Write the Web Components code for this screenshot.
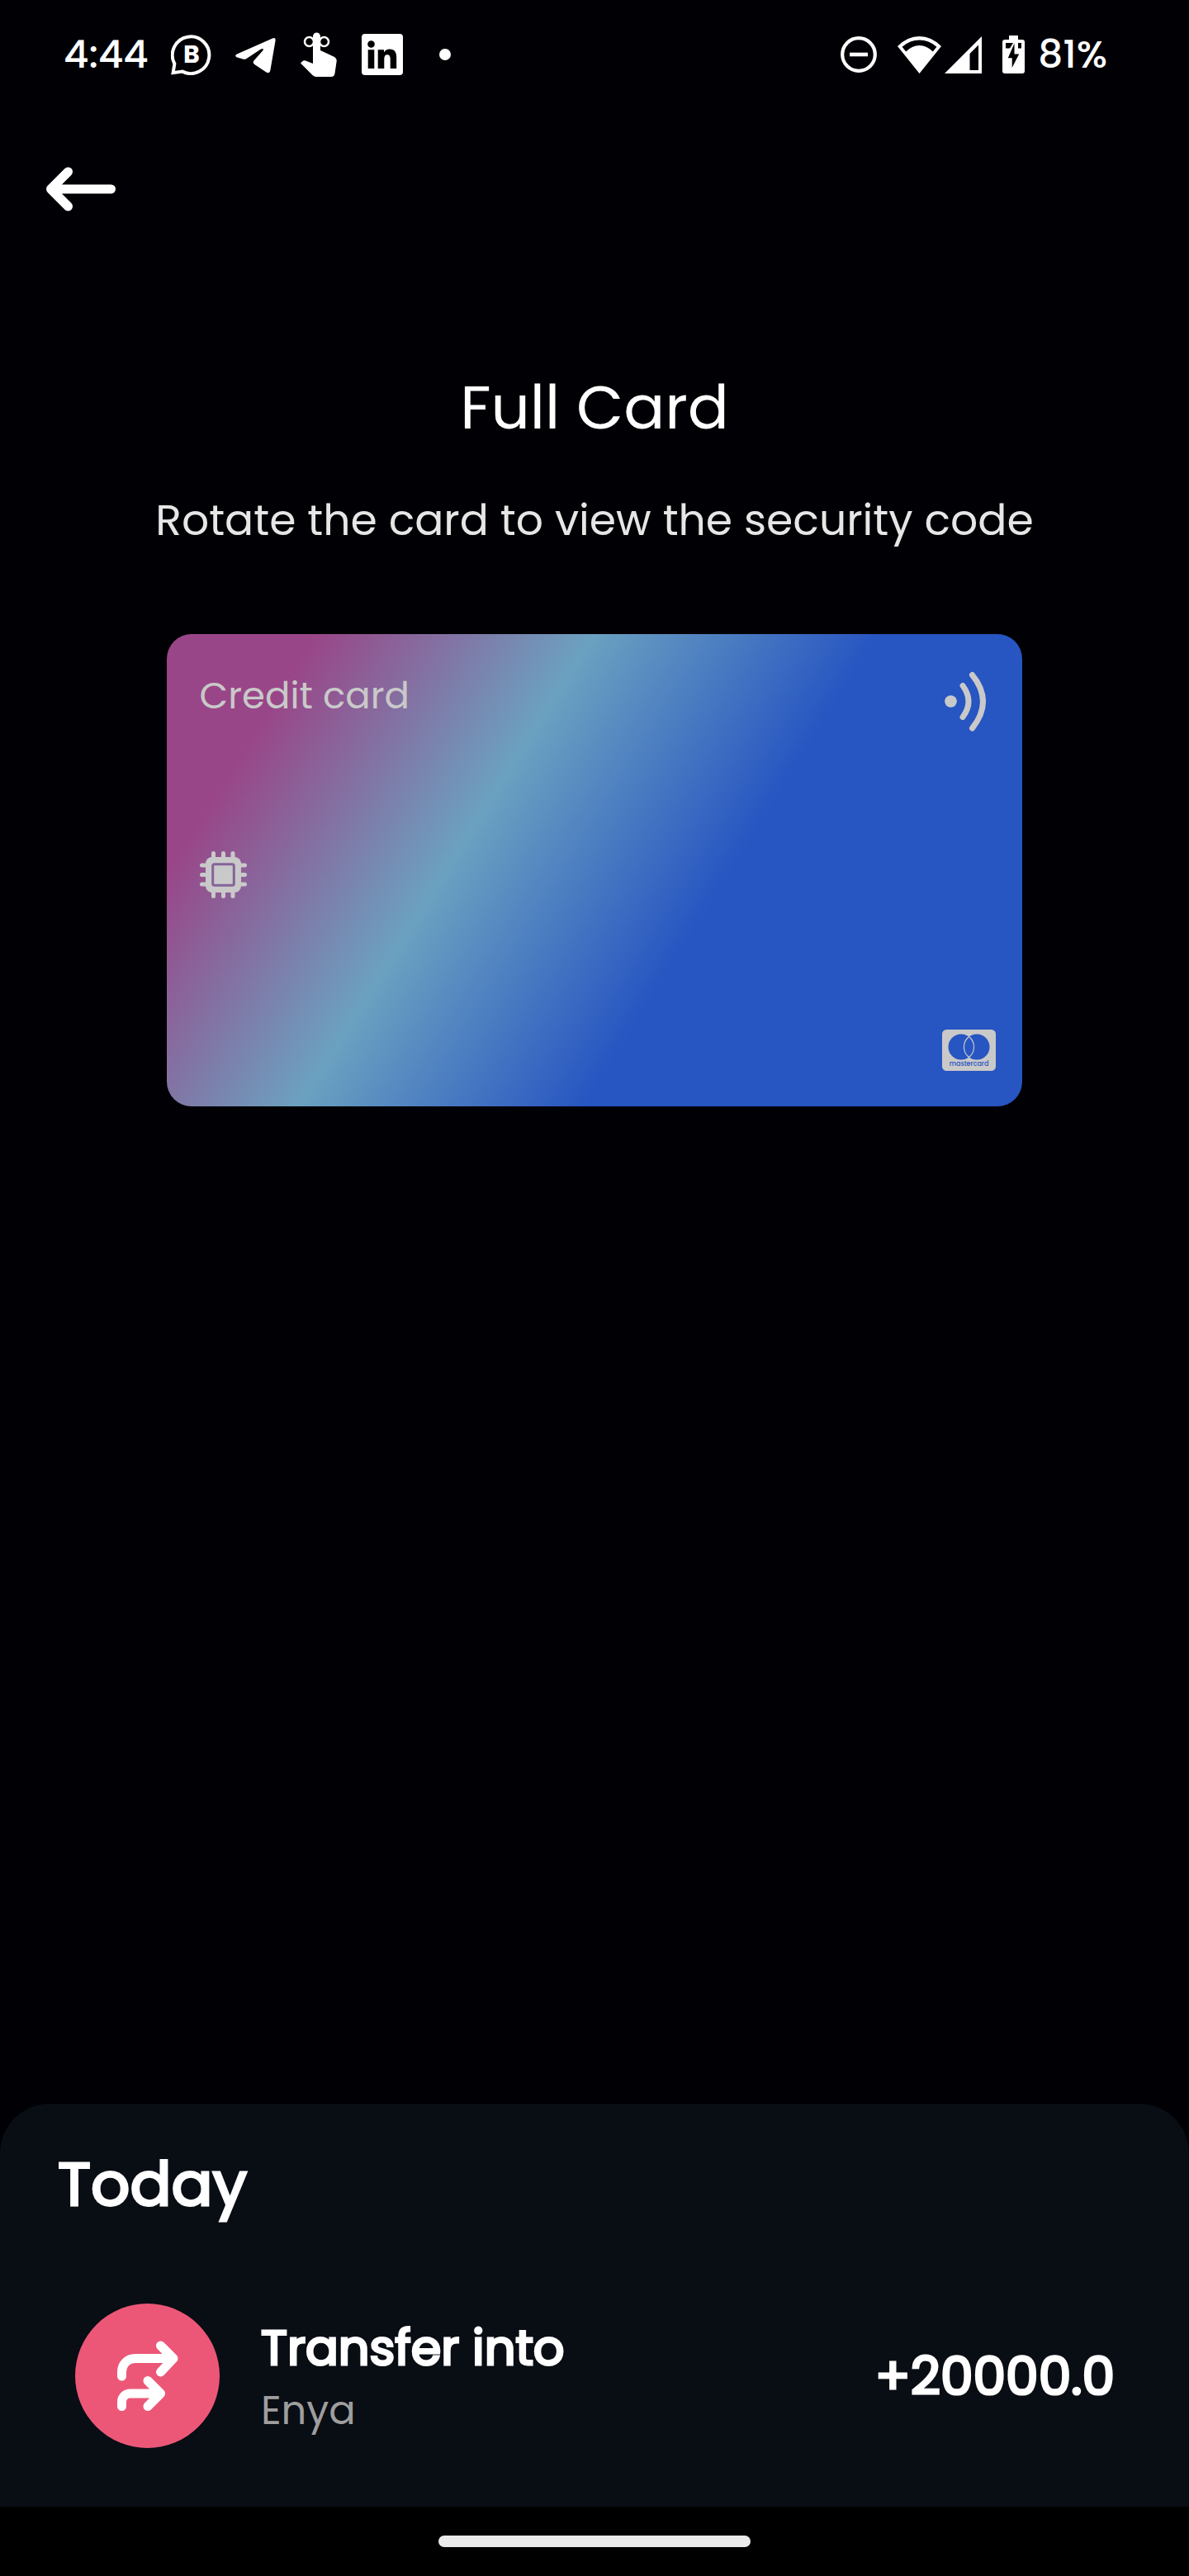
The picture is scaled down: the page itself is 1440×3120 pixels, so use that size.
<!DOCTYPE html>
<html lang="en">
<head>
<meta charset="utf-8">
<meta name="viewport" content="width=device-width, initial-scale=1">
<title>Full Card</title>
<style>
  html, body { margin: 0; background: #000005; }
  body { font-family: Poppins, Inter, "Liberation Sans", sans-serif; color: #fff; }
</style>
</head>
<body>
<full-card-screen></full-card-screen>

<script>
  const define = (name, html) => {
    const template = document.createElement('template');
    template.innerHTML = html;
    customElements.define(name, class extends HTMLElement {
      constructor() {
        super();
        this.attachShadow({ mode: 'open' }).append(template.content.cloneNode(true));
      }
    });
  };

  define('status-bar', `
    <style>
      :host { display: flex; justify-content: space-between; align-items: center; height: 132px; padding: 0 99px 0 77px; font-size: 47px; line-height: 56px; font-weight: 500; }
      div { display: flex; align-items: center; }
      .left { gap: 27px; }
      .right { gap: 25px; }
      .signal { gap: 4px; }
      .battery { gap: 16px; }
      svg { display: block; flex: none; }
    </style>
    <div class="left">
      <time>4:44</time>
      <svg width="50" height="50" viewBox="0 0 50 50" aria-hidden="true">
        <path d="M2.6 47.2 4.4 36.2A22.3 22.3 0 1 1 14 45.6Z" fill="none" stroke="#fff" stroke-width="4"/>
        <text x="25" y="35" font-size="30" font-weight="700" text-anchor="middle" fill="#fff">B</text>
      </svg>
      <svg width="50" height="50" viewBox="0 0 50 50" aria-hidden="true">
        <path d="M3 24.5 46 5.4Q50 4 49.6 8L43.4 44Q42.6 48.600 38.500 46.500L24.200 37Q21.500 35 23.500 32.600L34.500 20Q36 17 32 18.600L14.500 30Q12.500 31.300 10 30.600L2.500 28.300Q-.5 26.500 3 24.500Z" fill="#fff"/>
      </svg>
      <svg width="50" height="54" viewBox="0 0 50 54" aria-hidden="true">
        <path d="M18 38V5a4.500 4.500 0 0 1 9 0V22L43 29.500Q47 31.500 46.700 35L44.500 50Q44 54 40 54H22Q19.500 54 17.500 52L3 37.500 5.500 35Q7 34 9 34.500Z" fill="#fff"/>
        <circle cx="13.500" cy="11.500" r="5.500" fill="none" stroke="#fff" stroke-width="2.500"/>
        <circle cx="31.500" cy="11.500" r="5.500" fill="none" stroke="#fff" stroke-width="2.500"/>
      </svg>
      <svg width="50" height="50" viewBox="0 0 50 50" aria-hidden="true">
        <rect width="50" height="50" rx="4" fill="#fff"/>
        <circle cx="11.500" cy="12.500" r="4.300"/>
        <path d="M7.700 19.200H15.300V42H7.700ZM19.700 19.200H27V22.400Q29.200 18.600 33.800 18.600C40 18.600 42.200 22.500 42.200 29V42H34.700V30.500Q34.700 25.200 31.100 25.200 27.300 25.200 27.300 30.500V42H19.700Z"/>
      </svg>
      <svg width="50" height="50" viewBox="0 0 50 50" aria-hidden="true"><circle cx="24" cy="25" r="7" fill="#fff"/></svg>
    </div>
    <div class="right">
      <svg width="44" height="44" viewBox="0 0 44 44" aria-hidden="true">
        <circle cx="22" cy="22" r="19.800" fill="none" stroke="#fff" stroke-width="4.200"/>
        <path d="M11 22H33" stroke="#fff" stroke-width="4.600"/>
      </svg>
      <div class="signal">
        <svg width="53" height="45" viewBox="0 0 53 45" aria-hidden="true">
          <path fill-rule="evenodd" d="M0 12Q12 0 26.500 0T53 12L26.500 45ZM5.600 12.700 10.200 18.500Q17.500 11 26.500 11T42.800 18.500L47.400 12.700Q38 4.500 26.500 4.500T5.600 12.700Z" fill="#fff"/>
        </svg>
        <svg width="45" height="45" viewBox="0 0 45 45" aria-hidden="true">
          <path fill-rule="evenodd" d="M45 0V45H0ZM41 10.500 30.500 21V41H41Z" fill="#fff"/>
        </svg>
      </div>
      <div class="battery">
        <svg width="27" height="46" viewBox="0 0 27 46" aria-hidden="true">
          <path d="M8 0H19V5H24Q27 5 27 8V43Q27 46 24 46H3Q0 46 0 43V8Q0 5 3 5H8Z" fill="#fff"/>
          <path d="M4 9H13L9 15.500H4ZM19 9H23V15.500H19Z"/>
          <path d="M14.500 9.500V22.500H20.200L11.700 39V27.200H6.800Z"/>
        </svg>
        <span>81%</span>
      </div>
    </div>`);

  define('back-button', `
    <style>
      :host { display: block; }
      button { display: block; padding: 0; border: 0; background: none; color: inherit; cursor: pointer; }
      svg { display: block; }
    </style>
    <button type="button" aria-label="Back">
      <svg width="84" height="54" viewBox="0 0 84 54" fill="none" stroke="#fff" stroke-width="11" stroke-linecap="round" stroke-linejoin="round">
        <path d="M78.500 27H6M26.500 6 5.500 27 26.500 48"/>
      </svg>
    </button>`);

  define('credit-card', `
    <style>
      :host { display: flex; flex-direction: column; box-sizing: border-box; width: 72%; aspect-ratio: 1037 / 572; padding: 45px 32px 43px 40px; border-radius: 30px; color: #c9c9c9;
        background: linear-gradient(122deg, #994688 13%, #6ba1c0 37%, #2755c2 62%); }
      svg { display: block; }
      header { display: flex; justify-content: space-between; align-items: flex-start; }
      .kind { font-size: 45px; line-height: 60px; }
      .chip { margin-top: 144px; }
      .brand { margin: auto 0 0 auto; }
    </style>
    <header>
      <span class="kind"><slot></slot></span>
      <svg width="64" height="74" viewBox="0 0 64 74" fill="none" stroke="#c9c9c9" stroke-width="7" stroke-linecap="round" aria-hidden="true">
        <circle cx="9.500" cy="36.500" r="7.300" fill="#c9c9c9" stroke="none"/>
        <path d="M24 17.500Q38 36.500 24 55.500M35.500 4.500Q61.500 36.500 35.500 69"/>
      </svg>
    </header>
    <svg class="chip" width="57" height="57" viewBox="0 0 57 57" aria-hidden="true">
      <path d="M16.500 2.500V54.500M28.500 2.500V54.500M40 2.500V54.500M2.500 17H54.500M2.500 28.500H54.500M2.500 40H54.500" stroke="#c9c9c9" stroke-width="5" stroke-linecap="round"/>
      <rect x="7" y="7" width="43" height="43" rx="8" fill="#c9c9c9"/>
      <rect x="15.700" y="15.700" width="25.600" height="25.600" rx="2" fill="none" stroke="#85639a" stroke-width="3"/>
    </svg>
    <svg class="brand" width="65" height="50" viewBox="0 0 65 50" role="img" aria-label="mastercard">
      <rect width="65" height="50" rx="5.500" fill="#c9c9c9"/>
      <circle cx="23" cy="21" r="15.500" fill="#2755c2"/>
      <circle cx="42" cy="21" r="15.500" fill="#2755c2"/>
      <path d="M32.500 8.500A16 16 0 0 0 32.500 33.500A16 16 0 0 0 32.500 8.500Z" fill="#2755c2" stroke="#c9c9c9" stroke-width="1.200"/>
      <text x="32.500" y="44" font-size="8" font-weight="500" text-anchor="middle" fill="#2755c2">mastercard</text>
    </svg>`);

  define('transaction-row', `
    <style>
      :host { display: flex; align-items: center; gap: 50px; padding: 0 90px 0 91px; }
      .badge { display: grid; place-items: center; flex: none; width: 175px; height: 175px; border-radius: 50%; background: #ec5778; }
      .text { flex: 1; min-width: 0; padding-top: 4px; }
      .name { font-size: 59px; line-height: 80px; -webkit-text-stroke: 3px currentColor; }
      .who { font-size: 48px; line-height: 72px; color: #9e9e9e; }
      .amount { font-size: 63px; line-height: 80px; -webkit-text-stroke: 3px currentColor; }
    </style>
    <span class="badge">
      <svg width="80" height="88" viewBox="0 0 80 88" fill="none" stroke="#fff" stroke-width="11" stroke-linecap="round" stroke-linejoin="round" aria-hidden="true">
        <path d="M8.500 44V38.500A16 16 0 0 1 24.500 22.500H71M55.500 7 71 22.500 55.500 39M8.500 80.500V75A10 10 0 0 1 18.500 65H55.500M40 49.500 55.500 65 40 80.500"/>
      </svg>
    </span>
    <div class="text">
      <div class="name"><slot name="name"></slot></div>
      <div class="who"><slot name="who"></slot></div>
    </div>
    <div class="amount"><slot name="amount"></slot></div>`);

  define('activity-sheet', `
    <style>
      :host { display: block; padding: 49px 0 71px; border-radius: 60px 60px 0 0; background: #090d14; }
      h2 { margin: 0 0 97px; padding: 0 70px; font-size: 74px; line-height: 96px; font-weight: 400; -webkit-text-stroke: 3px currentColor; }
    </style>
    <h2><slot name="heading"></slot></h2>
    <slot></slot>`);

  define('gesture-bar', `
    <style>
      :host { display: flex; justify-content: center; align-items: center; height: 84px; background: #000; }
      i { width: 378px; height: 14px; border-radius: 7px; background: #eaeaea; }
    </style>
    <i></i>`);

  define('full-card-screen', `
    <style>
      :host { display: flex; flex-direction: column; min-height: 100vh; }
      nav { padding: 70px 56px 0; }
      main { display: flex; flex-direction: column; align-items: center; flex: 1; padding-top: 187px; }
      h1 { margin: 0 0 51px; font-size: 74px; line-height: 100px; font-weight: 400; }
      p { margin: 0 0 102px; font-size: 52px; line-height: 72px; color: #e6e6e6; }
    </style>
    <status-bar></status-bar>
    <nav><back-button></back-button></nav>
    <main>
      <h1>Full Card</h1>
      <p>Rotate the card to view the security code</p>
      <credit-card>Credit card</credit-card>
    </main>
    <activity-sheet>
      <span slot="heading">Today</span>
      <transaction-row>
        <span slot="name">Transfer into</span>
        <span slot="who">Enya</span>
        <span slot="amount">+20000.0</span>
      </transaction-row>
    </activity-sheet>
    <gesture-bar></gesture-bar>`);
</script>
</body>
</html>
